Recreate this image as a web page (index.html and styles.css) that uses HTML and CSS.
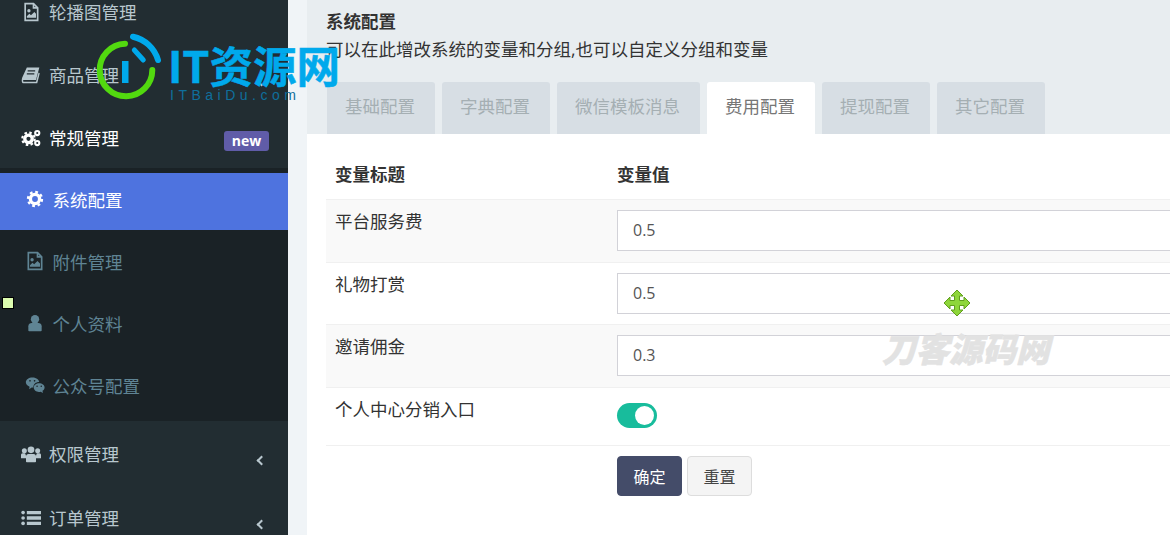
FILE: index.html
```html
<!DOCTYPE html>
<html lang="zh-CN">
<head>
    <meta charset="UTF-8">
    <meta name="viewport" content="width=device-width, initial-scale=1.0">
    <title>系统配置</title>
    <link rel="stylesheet" href="styles.css">
</head>
<body>
    <div class="app">
        <aside class="sidebar">
            <ul class="menu">
                <li class="menu-item">
                    <svg class="icon" viewBox="0 0 24 24"><path d="M5 2h10l5 5v15H5z" fill="none" stroke="currentColor" stroke-width="2"/><path d="M15 2v5h5" fill="none" stroke="currentColor" stroke-width="2"/><circle cx="9.500" cy="10.500" r="2" fill="currentColor"/><path d="M7 19v-2l3-3 2 2 4-4 2 2v5z" fill="currentColor"/></svg>
                    <span>轮播图管理</span>
                </li>
                <li class="menu-item">
                    <svg class="icon" viewBox="0 0 24 24"><path d="M7 3h15l-4 15H3.500C2 18 2 20 3.500 20H18l3-11 1.500 1-3 12H3C.5 22 .5 18 1.500 15z" fill="currentColor"/><path d="M8 7h9M7 10.500h9" stroke="#222d32" stroke-width="1.500"/></svg>
                    <span>商品管理</span>
                    <i class="chevron"></i>
                </li>
                <li class="menu-item menu-item-open">
                    <svg class="icon" viewBox="0 0 24 24"><circle cx="9" cy="13" r="4.500" fill="none" stroke="currentColor" stroke-width="4"/><circle cx="9" cy="13" r="7.500" fill="none" stroke="currentColor" stroke-width="2.500" stroke-dasharray="3 2.900"/><circle cx="19.500" cy="6" r="2.500" fill="none" stroke="currentColor" stroke-width="2.500"/><circle cx="19.500" cy="18" r="2.500" fill="none" stroke="currentColor" stroke-width="2.500"/></svg>
                    <span>常规管理</span>
                    <b class="badge">new</b>
                </li>
                <li>
                    <ul class="submenu">
                        <li class="sub-item sub-item-active">
                            <svg class="icon" viewBox="0 0 24 24"><circle cx="12" cy="12" r="5.500" fill="none" stroke="currentColor" stroke-width="4"/><circle cx="12" cy="12" r="8.400" fill="none" stroke="currentColor" stroke-width="2.800" stroke-dasharray="3.300 3.300"/></svg>
                            <span>系统配置</span>
                        </li>
                        <li class="sub-item">
                            <svg class="icon" viewBox="0 0 24 24"><path d="M4 2h11l5 5v15H4z" fill="none" stroke="currentColor" stroke-width="2"/><path d="M15 2v5h5" fill="none" stroke="currentColor" stroke-width="2"/><circle cx="8.500" cy="10.500" r="2" fill="currentColor"/><path d="M6 19v-2l3-3 2 2 4-4 3 3v4z" fill="currentColor"/></svg>
                            <span>附件管理</span>
                        </li>
                        <li class="sub-item">
                            <svg class="icon" viewBox="0 0 24 24"><circle cx="12" cy="7.500" r="5" fill="currentColor"/><path d="M4 21v-5c0-3 2-4 4-4h8c2 0 4 1 4 4v5q0 1-1 1H5q-1 0-1-1z" fill="currentColor"/></svg>
                            <span>个人资料</span>
                        </li>
                        <li class="sub-item">
                            <svg class="icon" viewBox="0 0 24 24"><path d="M9 3c5 0 8 3 8 5.500-4 0-7 2.500-7 6.500H8l-3 2 .5-3C2.500 13 1 11 1 8.800 1 5.500 4.500 3 9 3z" fill="currentColor"/><path d="M17 10c3.500 0 6.500 2.300 6.500 5 0 1.700-1 3-2.500 4l.5 2.500-2.700-1.500c-4 1-8.300-1-8.300-5 0-2.700 3-5 6.500-5z" fill="currentColor"/><circle cx="6" cy="7" r="1" fill="#1a2226"/><circle cx="11.500" cy="7" r="1" fill="#1a2226"/><circle cx="14.500" cy="13.500" r=".9" fill="#1a2226"/><circle cx="19.500" cy="13.500" r=".9" fill="#1a2226"/></svg>
                            <span>公众号配置</span>
                        </li>
                    </ul>
                </li>
                <li class="menu-item menu-item-low">
                    <svg class="icon" viewBox="0 0 24 24"><circle cx="4" cy="8" r="3" fill="currentColor"/><circle cx="20" cy="8" r="3" fill="currentColor"/><circle cx="12" cy="7" r="4" fill="currentColor"/><path d="M0 17v-4q0-2 2-2h3l1 3v3zM24 17v-4q0-2-2-2h-3l-1 3v3z" fill="currentColor"/><path d="M6 21v-6q0-3 3-3h6q3 0 3 3v6q0 1-1 1H7q-1 0-1-1z" fill="currentColor"/></svg>
                    <span>权限管理</span>
                    <i class="chevron"></i>
                </li>
                <li class="menu-item menu-item-low">
                    <svg class="icon" viewBox="0 0 24 24"><circle cx="2.500" cy="5.500" r="2.200" fill="currentColor"/><circle cx="2.500" cy="12" r="2.200" fill="currentColor"/><circle cx="2.500" cy="18.500" r="2.200" fill="currentColor"/><path d="M7 3.500h17v4H7zM7 10h17v4H7zM7 16.500h17v4H7z" fill="currentColor"/></svg>
                    <span>订单管理</span>
                    <i class="chevron"></i>
                </li>
            </ul>
        </aside>

        <main class="content">
            <header class="page-head">
                <h1 class="page-title">系统配置</h1>
                <p class="page-desc">可以在此增改系统的变量和分组,也可以自定义分组和变量</p>
                <nav class="tabs">
                    <a class="tab">基础配置</a>
                    <a class="tab">字典配置</a>
                    <a class="tab">微信模板消息</a>
                    <a class="tab tab-active">费用配置</a>
                    <a class="tab">提现配置</a>
                    <a class="tab">其它配置</a>
                </nav>
            </header>

            <section class="panel">
                <table class="config-table">
                    <thead>
                        <tr>
                            <th class="col-title">变量标题</th>
                            <th>变量值</th>
                        </tr>
                    </thead>
                    <tbody>
                        <tr class="row-odd">
                            <td>平台服务费</td>
                            <td><input class="field" type="text" value="0.5"></td>
                        </tr>
                        <tr>
                            <td>礼物打赏</td>
                            <td><input class="field" type="text" value="0.5"></td>
                        </tr>
                        <tr class="row-odd">
                            <td>邀请佣金</td>
                            <td><input class="field" type="text" value="0.3"></td>
                        </tr>
                        <tr class="row-switch">
                            <td>个人中心分销入口</td>
                            <td><span class="switch"><i class="switch-knob"></i></span></td>
                        </tr>
                        <tr class="row-actions">
                            <td></td>
                            <td>
                                <div class="actions">
                                    <button class="btn btn-primary" type="button">确定</button>
                                    <button class="btn btn-default" type="button">重置</button>
                                </div>
                            </td>
                        </tr>
                    </tbody>
                </table>
            </section>
        </main>
    </div>

    <!-- overlays sitting on top of the screenshot -->
    <div class="logo">
        <svg class="logo-mark" viewBox="0 0 80 80">
            <path d="M31 10.700A26.300 26.300 0 1 0 58.300 37" fill="none" stroke="#52d90f" stroke-width="6" stroke-linecap="round"/>
            <path d="M39 3.700A33.500 33.500 0 0 1 64 27" fill="none" stroke="#00a9ec" stroke-width="6" stroke-linecap="round"/>
            <path d="M40.300 17l9 10" fill="none" stroke="#00a9ec" stroke-width="5" stroke-linecap="round"/>
            <rect x="28" y="28" width="6.500" height="22" fill="#00a9ec"/>
        </svg>
        <div class="logo-name">IT资源网</div>
        <div class="logo-url">ITBaiDu.com</div>
    </div>
    <div class="watermark">刀客源码网</div>
    <i class="marker"></i>
    <svg class="move-cursor" viewBox="0 0 28 28"><path d="M14 1l6 6h-3.500v4.500H21V8l6 6-6 6v-3.500h-4.500V21H20l-6 6-6-6h3.500v-4.500H7V20l-6-6 6-6v3.500h4.500V7H8z" fill="#8ed63a" stroke="#5f9e1c" stroke-width="1"/></svg>
</body>
</html>
```

FILE: styles.css
```css
* {
    box-sizing: border-box;
}

html, body {
    margin: 0;
    height: 535px;
    overflow: hidden;
}

body {
    font-family: "Open Sans", "Noto Sans CJK SC", sans-serif;
    font-size: 17.5px;
    line-height: 25px;
    color: #333;
    background-color: #f0f4f7;
}

ul {
    list-style: none;
    margin: 0;
    padding: 0;
}

.app {
    display: flex;
    height: 535px;
}

/* sidebar */
.sidebar {
    flex: 0 0 288px;
    background-color: #222d32;
    overflow: hidden;
    font-family: "Noto Sans CJK SC", sans-serif;
}

.menu {
    margin-top: -21px;
}

.menu-item {
    display: flex;
    align-items: center;
    gap: 8px;
    height: 63px;
    padding: 2px 19px 0 21px;
    color: #b8c7ce;
}

.menu-item-low {
    height: 64px;
    padding-top: 1px;
}

.menu-item-open {
    color: #fff;
}

.icon {
    flex: none;
    width: 20px;
    height: 20px;
}

.badge {
    margin: 6px 0 0 auto;
    width: 45px;
    height: 20px;
    border-radius: 3px;
    background-color: #605ca8;
    color: #fff;
    font: bold 14px/20px "Open Sans", sans-serif;
    text-align: center;
}

.chevron {
    width: 7px;
    height: 7px;
    margin: 13px 4px 0 auto;
    border-left: 2px solid currentColor;
    border-bottom: 2px solid currentColor;
    transform: rotate(45deg);
}

.submenu {
    padding: 5px 0;
    background-color: #1a2226;
}

.sub-item {
    display: flex;
    align-items: center;
    gap: 7.500px;
    height: 57px;
    margin-bottom: 5px;
    padding: 0 0 5px 25px;
    color: #5f8494;
}

.sub-item:last-child {
    margin-bottom: 0;
}

.sub-item-active {
    background-color: #4e73df;
    color: #fff;
}

/* main area */
.content {
    flex: 1;
    min-width: 0;
    padding-left: 19px;
}

.page-head {
    height: 134px;
    padding: 9px 0 0 19px;
    background-color: #e8edf0;
}

.page-title {
    margin: 0;
    font-size: 17.5px;
    line-height: 25px;
    font-weight: bold;
}

.page-desc {
    margin: 3px 0 20px;
}

.tabs {
    display: flex;
    gap: 7px;
    margin-left: 1px;
}

.tab {
    height: 52px;
    padding: 0 20px 0 18px;
    border-radius: 3px 3px 0 0;
    background-color: #d7dee4;
    color: #a5afb3;
    line-height: 48px;
}

.tab-active {
    background-color: #fff;
    color: #777;
}

.panel {
    height: 401px;
    padding: 18px 0 0 19px;
    background-color: #fff;
    overflow: hidden;
}

.config-table {
    width: 1000px;
    table-layout: fixed;
    border-collapse: collapse;
}

.config-table th {
    height: 47px;
    padding: 0 10px 2px;
    text-align: left;
    font-weight: bold;
    border-bottom: 1px solid #f0f0f0;
}

.config-table .col-title {
    width: 281px;
    padding-left: 9px;
}

.config-table td {
    padding: 10px;
    vertical-align: top;
    border-bottom: 1px solid #f0f0f0;
}

.config-table td:first-child {
    padding-top: 9px;
    padding-left: 9px;
}

.row-odd td {
    padding-bottom: 11px;
    background-color: #f9f9f9;
}

.field {
    display: block;
    width: 100%;
    height: 41px;
    padding: 0 15px;
    border: 1px solid #d2d2d8;
    background-color: #fff;
    color: #555;
    font: 16px "Open Sans", sans-serif;
}

.row-switch td:last-child {
    padding-top: 15px;
    height: 58px;
}

.row-actions td {
    border-bottom: 0;
}

.actions {
    display: flex;
    gap: 5px;
}

.switch {
    position: relative;
    display: block;
    width: 40px;
    height: 25px;
    border-radius: 13px;
    background-color: #18bc9c;
}

.switch-knob {
    position: absolute;
    top: 3px;
    right: 3px;
    width: 19px;
    height: 19px;
    border-radius: 50%;
    background-color: #fff;
}

.btn {
    width: 65px;
    height: 40px;
    padding: 0;
    border-radius: 4px;
    font: 16px "Noto Sans CJK SC", sans-serif;
}

.btn-primary {
    border: 1px solid #444c69;
    background-color: #444c69;
    color: #fff;
}

.btn-default {
    border: 1px solid #ddd;
    background-color: #f4f4f4;
    color: #444;
}

/* overlays */
.logo {
    position: absolute;
    left: 94px;
    top: 33px;
    width: 250px;
    height: 72px;
}

.logo-mark {
    position: absolute;
    left: 0;
    top: 0;
    width: 80px;
    height: 80px;
}

.logo-name {
    position: absolute;
    left: 74px;
    top: 8px;
    color: #00a9ec;
    font: bold 43.500px/48px "Noto Sans CJK SC", sans-serif;
    -webkit-text-stroke: 0.5px #00a9ec;
    white-space: nowrap;
}

.logo-url {
    position: absolute;
    left: 76px;
    top: 54px;
    color: #0f6f9c;
    font: 14px/16px "Liberation Sans", sans-serif;
    letter-spacing: 4.5px;
    white-space: nowrap;
}

.watermark {
    position: absolute;
    left: 882px;
    top: 330px;
    color: #e2e2e2;
    font: italic 900 33.5px/36px "Noto Sans CJK SC", sans-serif;
    -webkit-text-stroke: 0.5px #e2e2e2;
    white-space: nowrap;
}

.marker {
    position: absolute;
    left: 2px;
    top: 297px;
    width: 12px;
    height: 12px;
    border: 1px solid #000;
    background-color: #dcfcb0;
}

.move-cursor {
    position: absolute;
    left: 943px;
    top: 289px;
    width: 28px;
    height: 28px;
}
```
